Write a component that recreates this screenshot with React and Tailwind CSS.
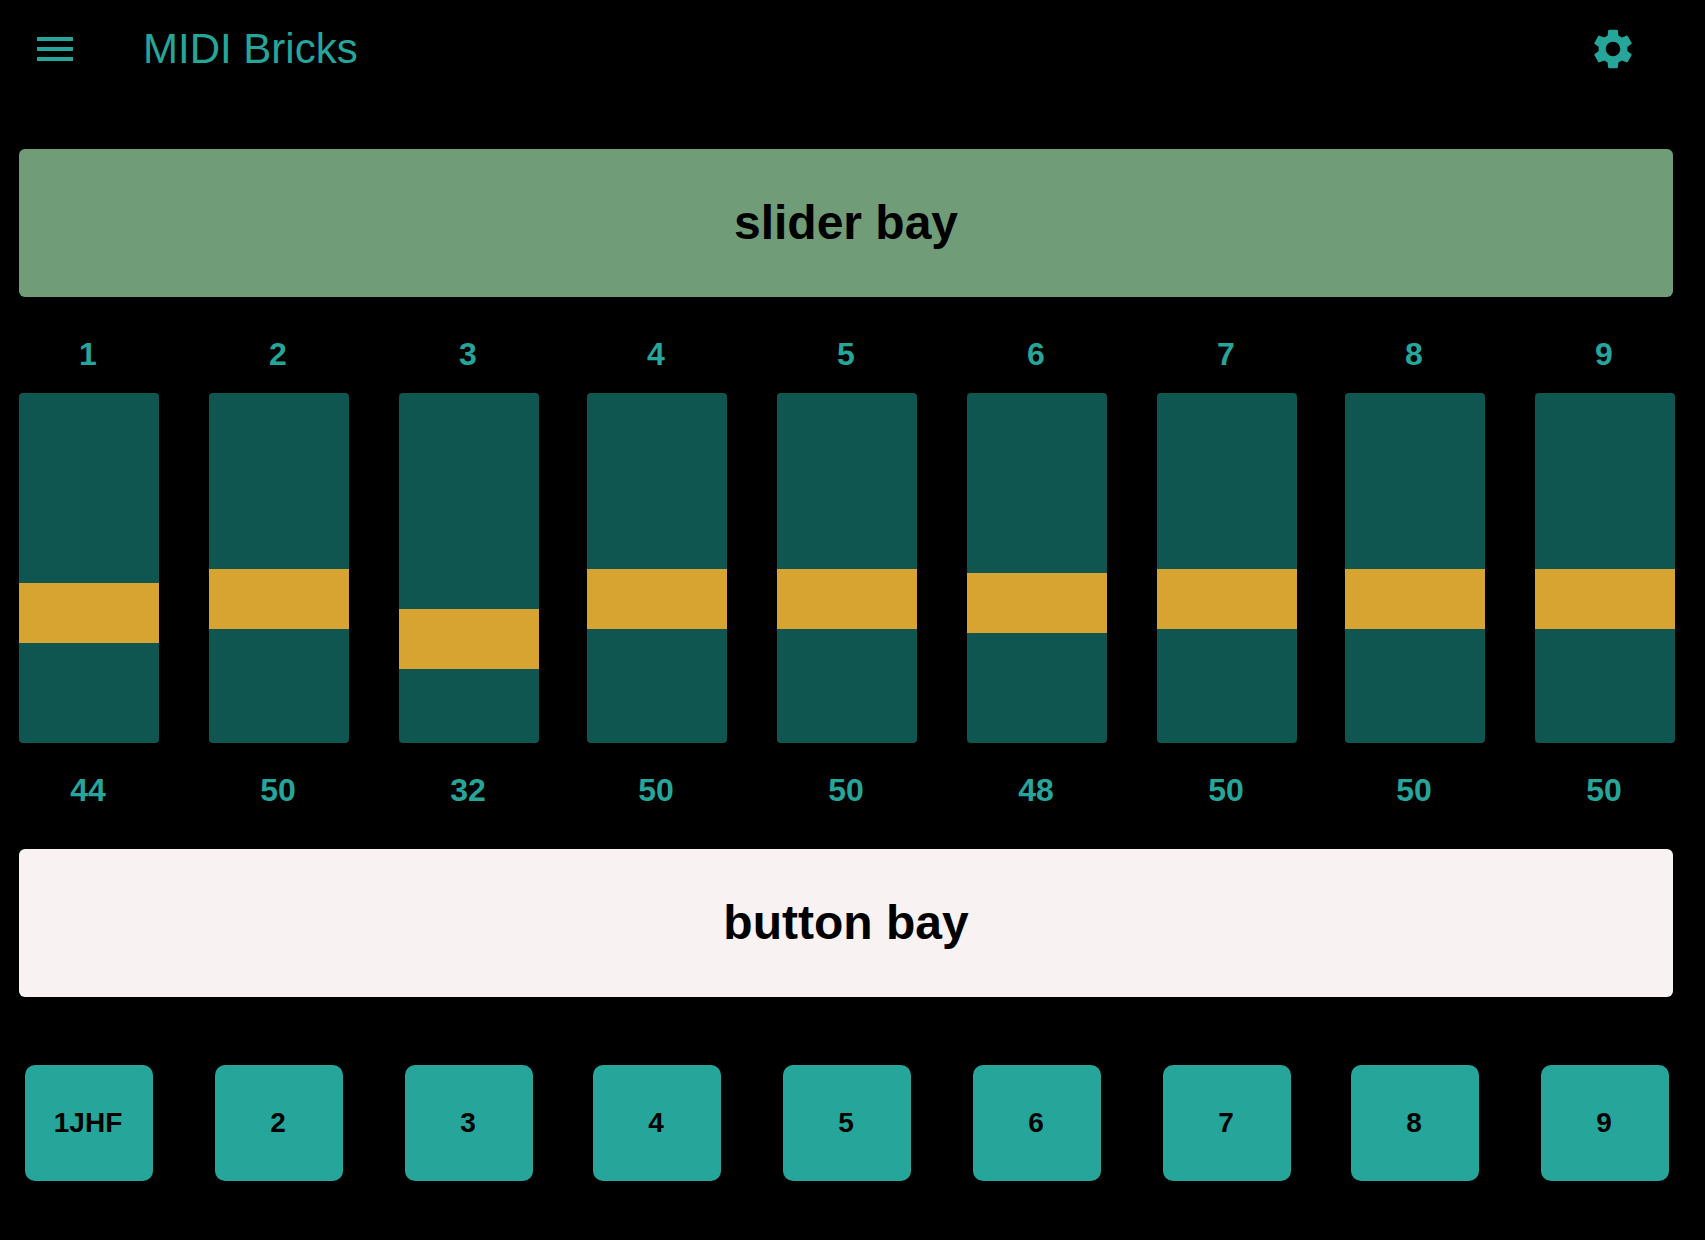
const sliders = [
  { label: "1", value: 44, top: 190, cell: "w-[190px]" },
  { label: "2", value: 50, top: 176, cell: "w-[190px]" },
  { label: "3", value: 32, top: 216, cell: "w-[188px]" },
  { label: "4", value: 50, top: 176, cell: "w-[190px]" },
  { label: "5", value: 50, top: 176, cell: "w-[190px]" },
  { label: "6", value: 48, top: 180, cell: "w-[190px]" },
  { label: "7", value: 50, top: 176, cell: "w-[188px]" },
  { label: "8", value: 50, top: 176, cell: "w-[190px]" },
  { label: "9", value: 50, top: 176, cell: "w-[170px]" },
];

const buttons = ["1JHF", "2", "3", "4", "5", "6", "7", "8", "9"];

function MenuIcon() {
  return (
    <svg viewBox="0 0 24 24" className="h-12 w-12 fill-[#26a69a]">
      <path d="M3 18h18v-2H3v2zm0-5h18v-2H3v2zm0-7v2h18V6H3z" />
    </svg>
  );
}

function GearIcon() {
  return (
    <svg viewBox="0 0 24 24" className="h-12 w-12 fill-[#26a69a]">
      <path d="M19.14 12.94c.04-.3.06-.61.06-.94 0-.32-.02-.64-.07-.94l2.03-1.58c.18-.14.23-.41.12-.61l-1.92-3.32c-.12-.22-.37-.29-.59-.22l-2.39.96c-.5-.38-1.03-.7-1.62-.94l-.36-2.54c-.04-.24-.24-.41-.48-.41h-3.84c-.24 0-.43.17-.47.41l-.36 2.54c-.59.24-1.13.57-1.62.94l-2.39-.96c-.22-.08-.47 0-.59.22L2.74 8.87c-.12.21-.08.47.12.61l2.03 1.58c-.05.3-.09.63-.09.94s.02.64.07.94l-2.03 1.58c-.18.14-.23.41-.12.61l1.92 3.32c.12.22.37.29.59.22l2.39-.96c.5.38 1.03.7 1.62.94l.36 2.54c.05.24.24.41.48.41h3.84c.24 0 .44-.17.47-.41l.36-2.54c.59-.24 1.13-.56 1.62-.94l2.39.96c.22.08.47 0 .59-.22l1.92-3.32c.12-.22.07-.47-.12-.61l-2.01-1.58zM12 15.6c-1.98 0-3.6-1.62-3.6-3.6s1.62-3.6 3.6-3.6 3.6 1.62 3.6 3.6-1.62 3.6-3.6 3.6z" />
    </svg>
  );
}

function Slider({ item }) {
  return (
    <div className={`${item.cell} shrink-0`}>
      <div className="mt-[37px] mb-[19px] w-[138px] text-center text-[32px] leading-[40px] font-bold text-[#26a69a]">
        {item.label}
      </div>

      <div className="relative h-[350px] w-[140px] overflow-hidden rounded-[4px] bg-[#0f5650]">
        <div
          className="absolute left-0 h-[60px] w-full bg-[#d8a431]"
          style={{ top: item.top }}
        />
      </div>

      <div className="mt-[27px] mb-[39px] w-[138px] text-center text-[32px] leading-[40px] font-bold text-[#26a69a]">
        {item.value}
      </div>
    </div>
  );
}

function Bay({ title, className }) {
  return (
    <div
      className={`ml-[19px] flex h-[148px] w-[1654px] items-center justify-center rounded-[6px] text-[48px] font-bold text-black ${className}`}
    >
      {title}
    </div>
  );
}

export default function App() {
  return (
    <div className="h-[1240px] w-[1705px] overflow-hidden bg-black font-['Liberation_Sans',Arial,sans-serif]">
      <header className="flex h-[98px] items-center pr-[68px] pl-[31px]">
        <MenuIcon />
        <div className="ml-[64px] flex-1 text-[42px] leading-[48px] text-[#26a69a]">
          MIDI Bricks
        </div>
        <GearIcon />
      </header>

      <div className="mt-[51px]">
        <Bay title="slider bay" className="bg-[#709c77]" />
      </div>

      <div className="flex pl-[19px]">
        {sliders.map((item) => (
          <Slider key={item.label} item={item} />
        ))}
      </div>

      <Bay title="button bay" className="bg-[#f8f2f2]" />

      <div className="mt-[68px] flex pl-[19px]">
        {buttons.map((label, i) => (
          <div key={label} className={`${sliders[i].cell} shrink-0`}>
            <button className="ml-[6px] flex h-[116px] w-[128px] items-center justify-center rounded-[10px] bg-[#26a69a] pr-[2px] text-[28px] font-bold text-black">
              {label}
            </button>
          </div>
        ))}
      </div>
    </div>
  );
}
